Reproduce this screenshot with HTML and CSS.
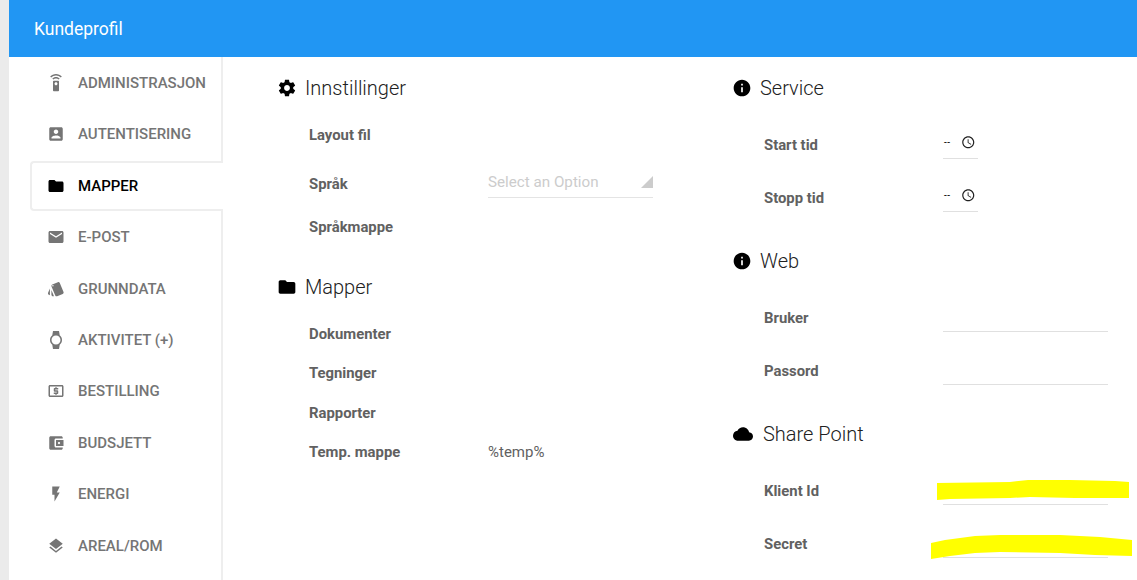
FILE: index.html
```html
<!DOCTYPE html>
<html lang="no">
<head>
<meta charset="utf-8">
<title>Kundeprofil</title>
<link rel="stylesheet" href="styles.css">
</head>
<body>
<div class="app">
  <header class="topbar">Kundeprofil</header>
  <div class="body">
    <nav class="sidebar">
      <a class="tab"><svg class="tab-icon" viewBox="0 0 24 24"><path d="M15 9H9c-.55 0-1 .45-1 1v12c0 .55.45 1 1 1h6c.55 0 1-.45 1-1V10c0-.55-.45-1-1-1zm-3 6c-1.1 0-2-.9-2-2s.9-2 2-2 2 .9 2 2-.9 2-2 2zM7.05 6.05l1.41 1.41C9.37 6.56 10.62 6 12 6s2.63.56 3.54 1.46l1.41-1.41C15.68 4.78 13.93 4 12 4s-3.68.78-4.95 2.05zM12 0C8.96 0 6.21 1.23 4.22 3.22l1.41 1.41C7.26 3.01 9.51 2 12 2s4.74 1.01 6.36 2.64l1.41-1.41C17.79 1.23 15.04 0 12 0z"/></svg>ADMINISTRASJON</a>
      <a class="tab"><svg class="tab-icon" viewBox="0 0 24 24"><path d="M3 5v14c0 1.1.89 2 2 2h14c1.1 0 2-.9 2-2V5c0-1.1-.9-2-2-2H5c-1.11 0-2 .9-2 2zm12 4c0 1.66-1.34 3-3 3s-3-1.34-3-3 1.34-3 3-3 3 1.34 3 3zm-9 8c0-2 4-3.1 6-3.1s6 1.1 6 3.1v1H6v-1z"/></svg>AUTENTISERING</a>
      <a class="tab active"><svg class="tab-icon" viewBox="0 0 24 24"><path d="M10 4H4c-1.1 0-1.99.9-1.99 2L2 18c0 1.1.9 2 2 2h16c1.1 0 2-.9 2-2V8c0-1.1-.9-2-2-2h-8l-2-2z"/></svg>MAPPER</a>
      <a class="tab"><svg class="tab-icon" viewBox="0 0 24 24"><path d="M20 4H4c-1.1 0-1.99.9-1.99 2L2 18c0 1.1.9 2 2 2h16c1.1 0 2-.9 2-2V6c0-1.1-.9-2-2-2zm0 4l-8 5-8-5V6l8 5 8-5v2z"/></svg>E-POST</a>
      <a class="tab"><svg class="tab-icon" viewBox="0 0 24 24"><path d="M2.53 19.65l1.34.56v-9.03l-2.43 5.86c-.41 1.02.08 2.19 1.09 2.61zm19.5-3.7L17.07 3.98c-.31-.75-1.04-1.21-1.81-1.23-.26 0-.53.04-.79.15L7.1 5.95c-.75.31-1.21 1.03-1.23 1.8-.01.27.04.54.15.8l4.96 11.97c.31.76 1.05 1.22 1.83 1.23.26 0 .52-.05.77-.15l7.36-3.05c1.02-.42 1.51-1.59 1.09-2.6zM7.88 8.75c-.55 0-1-.45-1-1s.45-1 1-1 1 .45 1 1-.45 1-1 1zm-2 11c0 1.1.9 2 2 2h1.45l-3.45-8.34v6.34z"/></svg>GRUNNDATA</a>
      <a class="tab"><svg class="tab-icon" viewBox="0 0 24 24"><path d="M20 12c0-2.54-1.19-4.81-3.04-6.27L16 0H8l-.95 5.73C5.19 7.19 4 9.45 4 12s1.19 4.81 3.05 6.27L8 24h8l.96-5.73C18.81 16.81 20 14.54 20 12zM6 12c0-3.31 2.69-6 6-6s6 2.69 6 6-2.69 6-6 6-6-2.69-6-6z"/></svg>AKTIVITET (+)</a>
      <a class="tab"><svg class="tab-icon" viewBox="0 0 24 24"><path d="M11 17h2v-1h1c.55 0 1-.45 1-1v-3c0-.55-.45-1-1-1h-3v-1h4V8h-2V7h-2v1h-1c-.55 0-1 .45-1 1v3c0 .55.45 1 1 1h3v1H9v2h2v1zm9-13H4c-1.11 0-1.99.89-1.99 2L2 18c0 1.11.89 2 2 2h16c1.11 0 2-.89 2-2V6c0-1.11-.89-2-2-2zm0 14H4V6h16v12z"/></svg>BESTILLING</a>
      <a class="tab"><svg class="tab-icon" viewBox="0 0 24 24"><path d="M21 18v1c0 1.1-.9 2-2 2H5c-1.11 0-2-.9-2-2V5c0-1.1.89-2 2-2h14c1.1 0 2 .9 2 2v1h-9c-1.11 0-2 .9-2 2v8c0 1.1.89 2 2 2h9zm-9-2h10V8H12v8zm4-2.5c-.83 0-1.5-.67-1.5-1.5s.67-1.5 1.5-1.5 1.5.67 1.5 1.5-.67 1.5-1.5 1.5z"/></svg>BUDSJETT</a>
      <a class="tab"><svg class="tab-icon" viewBox="0 0 24 24"><path d="M7 2v11h3v9l7-12h-4l4-8z"/></svg>ENERGI</a>
      <a class="tab"><svg class="tab-icon" viewBox="0 0 24 24"><path d="M11.99 18.54l-7.37-5.73L3 14.07l9 7 9-7-1.63-1.27-7.38 5.74zM12 16l7.36-5.73L21 9l-9-7-9 7 1.63 1.27L12 16z"/></svg>AREAL/ROM</a>
    </nav>
    <main class="content">
      <section class="col col-left">
        <h2 class="head"><svg class="head-icon" viewBox="0 0 24 24"><path d="M19.43 12.98c.04-.32.07-.64.07-.98s-.03-.66-.07-.98l2.11-1.65c.19-.15.24-.42.12-.64l-2-3.46c-.12-.22-.39-.3-.61-.22l-2.49 1c-.52-.4-1.08-.73-1.69-.98l-.38-2.65C14.46 2.18 14.25 2 14 2h-4c-.25 0-.46.18-.49.42l-.38 2.65c-.61.25-1.17.59-1.69.98l-2.49-1c-.23-.09-.49 0-.61.22l-2 3.46c-.13.22-.07.49.12.64l2.11 1.65c-.04.32-.07.65-.07.98s.03.66.07.98l-2.11 1.65c-.19.15-.24.42-.12.64l2 3.46c.12.22.39.3.61.22l2.49-1c.52.4 1.08.73 1.69.98l.38 2.65c.03.24.24.42.49.42h4c.25 0 .46-.18.49-.42l.38-2.65c.61-.25 1.17-.59 1.69-.98l2.49 1c.23.09.49 0 .61-.22l2-3.46c.12-.22.07-.49-.12-.64l-2.11-1.65zM12 15.5c-1.93 0-3.5-1.57-3.5-3.5s1.57-3.5 3.5-3.5 3.5 1.57 3.5 3.5-1.57 3.5-3.5 3.5z"/></svg>Innstillinger</h2>
        <div class="row row-first"><span class="label">Layout fil</span></div>
        <div class="row row-select">
          <span class="label">Språk</span>
          <div class="select"><span class="placeholder">Select an Option</span><span class="caret"></span></div>
        </div>
        <div class="row"><span class="label">Språkmappe</span></div>
        <h2 class="head head-next"><svg class="head-icon" viewBox="0 0 24 24"><path d="M10 4H4c-1.1 0-1.99.9-1.99 2L2 18c0 1.1.9 2 2 2h16c1.1 0 2-.9 2-2V8c0-1.1-.9-2-2-2h-8l-2-2z"/></svg>Mapper</h2>
        <div class="row row-first-b"><span class="label">Dokumenter</span></div>
        <div class="row"><span class="label">Tegninger</span></div>
        <div class="row"><span class="label">Rapporter</span></div>
        <div class="row"><span class="label">Temp. mappe</span><span class="value">%temp%</span></div>
      </section>
      <section class="col col-right">
        <h2 class="head"><svg class="head-icon" viewBox="0 0 24 24"><path d="M12 2C6.48 2 2 6.48 2 12s4.48 10 10 10 10-4.48 10-10S17.52 2 12 2zm1 15h-2v-6h2v6zm0-8h-2V7h2v2z"/></svg>Service</h2>
        <div class="field-row first"><span class="label">Start tid</span>
          <div class="time"><span class="dash">--</span><svg class="clock" viewBox="0 0 24 24"><path d="M11.99 2C6.47 2 2 6.48 2 12s4.47 10 9.99 10C17.52 22 22 17.52 22 12S17.52 2 11.99 2zM12 20c-4.42 0-8-3.58-8-8s3.58-8 8-8 8 3.58 8 8-3.58 8-8 8zm.5-13H11v6l5.25 3.15.75-1.23-4.5-2.67z"/></svg></div></div>
        <div class="field-row"><span class="label">Stopp tid</span>
          <div class="time"><span class="dash">--</span><svg class="clock" viewBox="0 0 24 24"><path d="M11.99 2C6.47 2 2 6.48 2 12s4.47 10 9.99 10C17.52 22 22 17.52 22 12S17.52 2 11.99 2zM12 20c-4.42 0-8-3.58-8-8s3.58-8 8-8 8 3.58 8 8-3.58 8-8 8zm.5-13H11v6l5.25 3.15.75-1.23-4.5-2.67z"/></svg></div></div>
        <h2 class="head head-gap"><svg class="head-icon" viewBox="0 0 24 24"><path d="M12 2C6.48 2 2 6.48 2 12s4.48 10 10 10 10-4.48 10-10S17.52 2 12 2zm1 15h-2v-6h2v6zm0-8h-2V7h2v2z"/></svg>Web</h2>
        <div class="field-row first"><span class="label">Bruker</span><div class="input"></div></div>
        <div class="field-row"><span class="label">Passord</span><div class="input"></div></div>
        <h2 class="head head-gap"><svg class="head-icon cloud" viewBox="0 0 24 24"><path d="M19.35 10.04C18.67 6.59 15.64 4 12 4 9.11 4 6.6 5.64 5.35 8.04 2.34 8.36 0 10.91 0 14c0 3.31 2.69 6 6 6h13c2.76 0 5-2.24 5-5 0-2.64-2.05-4.78-4.65-4.96z"/></svg>Share Point</h2>
        <div class="field-row first"><span class="label">Klient Id</span><div class="input"></div></div>
        <div class="field-row"><span class="label">Secret</span><div class="input"></div></div>
      </section>
    </main>
  </div>
  <svg class="scribble" viewBox="0 0 1137 580"><path d="M937 483 L1010 482 L1028 480 L1070 480 L1115 481 L1129 482 L1129 498 L1075 498 L1030 497 L1010 498 L950 499 L937 500Z"/><path d="M931 543 L945 540 L975 536 L1000 535 L1060 535 L1100 537 L1132 540 L1132 556 L1095 555 L1060 553 L1000 552 L975 553 L950 556 L931 559Z"/></svg>
</div>
</body>
</html>
```
FILE: styles.css
```css
* { box-sizing: border-box; }
html, body { margin: 0; height: 100%; }
body {
  background: #ebebeb;
  padding-left: 9px;
  font-family: Roboto, "Liberation Sans", sans-serif;
  overflow: hidden;
}
.app {
  position: relative;
  height: 580px;
  background: #fff;
  overflow: hidden;
}
.topbar {
  height: 57px;
  background: #2196f3;
  color: #fff;
  font-size: 17.5px;
  font-weight: 400;
  line-height: 58px;
  padding-left: 25px;
}
.body { display: flex; }
.sidebar {
  width: 214px;
  flex: none;
  height: 523px;
  border-right: 2px solid #eee;
  padding: 0.4px 0 0 21px;
}
.tab {
  display: flex;
  align-items: center;
  height: 51.4px;
  padding-left: 17px;
  color: #757575;
  font-size: 15px;
  font-weight: 500;
  white-space: nowrap;
}
.tab-icon {
  width: 18px;
  height: 18px;
  margin-right: 13px;
  flex: none;
  fill: #757575;
}
.tab.active {
  position: relative;
  height: 50.4px;
  margin: 0.5px -2px 0.5px 0;
  padding-left: 15px;
  color: #000;
  background: #fff;
  border: 2px solid #eee;
  border-right: 0;
  border-radius: 4px 0 0 4px;
}
.tab.active .tab-icon { fill: #000; }
.content {
  flex: 1;
  display: flex;
  padding: 16px 0 0 55px;
}
.col-left { width: 455px; flex: none; }
.col-right { flex: 1; }
.head {
  display: flex;
  align-items: center;
  height: 30px;
  margin: 0;
  color: #212121;
  font-size: 20px;
  font-weight: 300;
}
.head-icon {
  width: 20px;
  height: 20px;
  margin: 0 8.5px 0 -1.5px;
  flex: none;
  fill: #000;
}
.head-icon.cloud { margin: 0 10px 0 0; }
.head-next { margin-top: 25px; }
.head-gap { margin-top: 21.5px; }
.row {
  display: flex;
  align-items: center;
  height: 39.5px;
  padding-left: 31px;
}
.row-first { margin-top: 12px; }
.row-first-b { margin-top: 12.5px; }
.row-select { height: 47px; margin-top: 5.5px; }
.label {
  color: #616161;
  font-size: 14.85px;
  font-weight: 700;
  width: 179px;
  flex: none;
}
.value {
  color: #616161;
  font-size: 15px;
}
.select {
  display: flex;
  align-items: center;
  justify-content: space-between;
  width: 165px;
  height: 31px;
  margin: 1px 0 3px;
  border-bottom: 1px solid #e4e4e4;
}
.placeholder {
  color: #ccc;
  font-size: 15.2px;
}
.caret {
  width: 0;
  height: 0;
  border-style: solid;
  border-width: 0 0 12px 12px;
  border-color: transparent transparent #ccc transparent;
}
.field-row {
  display: flex;
  align-items: center;
  height: 53px;
  padding-left: 31px;
}
.field-row.first { margin-top: 15.5px; }
.input, .time {
  height: 27px;
  border-bottom: 1px solid #e0e0e0;
  margin-top: 1px;
}
.input { width: 165px; }
.time {
  display: flex;
  align-items: center;
  width: 35px;
  padding: 0 0 6px 1px;
}
.dash {
  color: #000;
  font-size: 10px;
  line-height: 1;
  width: 17px;
  flex: none;
  margin-top: 2px;
  letter-spacing: 0.4px;
  font-variant-ligatures: none;
}
.clock {
  width: 14.5px;
  height: 14.5px;
  flex: none;
  fill: #212121;
}
.scribble {
  position: absolute;
  left: -9px;
  top: 0;
  width: 1137px;
  height: 580px;
  pointer-events: none;
  fill: #ffff00;
}
```
